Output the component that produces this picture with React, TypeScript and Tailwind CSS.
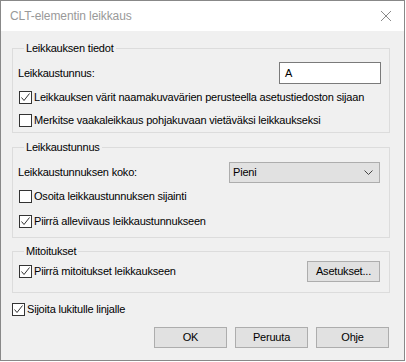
import React from 'react';

const font = { fontFamily: '"Liberation Sans", Arial, sans-serif' };

const CheckBox = ({ checked, label }: { checked?: boolean; label: string }) => (
  <label className="flex items-center h-[16px] text-black">
    <span className="w-[13px] h-[13px] border border-[#333333] bg-white flex items-center justify-center shrink-0">
      {checked && (
        <svg width="11" height="11" viewBox="0 0 11 11">
          <path d="M1.5 5.5 L4 8.5 L9.5 1.5" fill="none" stroke="#333333" strokeWidth="1" />
        </svg>
      )}
    </span>
    <span className="ml-[2px] whitespace-nowrap">{label}</span>
  </label>
);

const Button = ({ children, className = '' }: { children: React.ReactNode; className?: string }) => (
  <button className={`h-[21px] w-[73px] bg-[#e1e1e1] border border-[#adadad] text-black leading-none ${className}`}>
    {children}
  </button>
);

const Group = ({ title, children, className = '' }: { title: string; children: React.ReactNode; className?: string }) => (
  <fieldset className={`border border-[#dcdcdc] w-[378px] min-w-0 pl-[5px] pr-[8px] ${className}`}>
    <legend className="ml-[6px] px-[2px] h-[16px] leading-[16px] text-black">{title}</legend>
    {children}
  </fieldset>
);

export default function App() {
  return (
    <div className="w-[405px] h-[361px] border border-[#888888] bg-[#f0f0f0] flex flex-col text-[11px] tracking-[-0.2px]" style={font}>
      {/* Title bar */}
      <div className="h-[30px] bg-white flex items-center justify-between pl-[9px] pr-[12px] shrink-0">
        <span className="text-[#999999] text-[12px] tracking-[-0.1px]">CLT-elementin leikkaus</span>
        <svg width="12" height="12" viewBox="0 0 12 12">
          <path d="M1 1 L11 11 M11 1 L1 11" stroke="#8a8a8a" strokeWidth="1" />
        </svg>
      </div>

      <div className="flex flex-col pl-[11px] pt-[9px]">
        <Group title="Leikkauksen tiedot" className="pb-[4px]">
          <div className="flex items-center justify-between mt-[6px] h-[22px]">
            <span>Leikkaustunnus:</span>
            <div className="w-[102px] h-[22px] border border-[#7a7a7a] bg-white flex items-center pl-[5px] shrink-0">A</div>
          </div>
          <div className="flex flex-col gap-[7px] mt-[5px] pl-[1px]">
            <CheckBox checked label="Leikkauksen värit naamakuvavärien perusteella asetustiedoston sijaan" />
            <CheckBox label="Merkitse vaakaleikkaus pohjakuvaan vietäväksi leikkaukseksi" />
          </div>
        </Group>

        <Group title="Leikkaustunnus" className="mt-[6px] pb-[8px]">
          <div className="flex items-center justify-between mt-[7px] h-[21px]">
            <span>Leikkaustunnuksen koko:</span>
            <div className="w-[151px] h-[21px] border border-[#adadad] bg-[#e1e1e1] flex items-center justify-between pl-[3px] pr-[6px] mr-[1px] shrink-0">
              <span>Pieni</span>
              <svg width="9" height="5" viewBox="0 0 9 5">
                <path d="M0.5 0.5 L4.5 4.5 L8.5 0.5" fill="none" stroke="#444444" strokeWidth="1" />
              </svg>
            </div>
          </div>
          <div className="flex flex-col gap-[9px] mt-[5px] pl-[1px]">
            <CheckBox label="Osoita leikkaustunnuksen sijainti" />
            <CheckBox checked label="Piirrä alleviivaus leikkaustunnukseen" />
          </div>
        </Group>

        <Group title="Mitoitukset" className="mt-[5px] pb-[10px]">
          <div className="flex items-center justify-between mt-[2px] h-[21px] pl-[1px]">
            <CheckBox checked label="Piirrä mitoitukset leikkaukseen" />
            <Button className="mr-[1px]">Asetukset...</Button>
          </div>
        </Group>

        <div className="mt-[8px]">
          <CheckBox checked label="Sijoita lukitulle linjalle" />
        </div>

        <div className="flex justify-end gap-[8px] mt-[10px] pr-[15px]">
          <Button>OK</Button>
          <Button>Peruuta</Button>
          <Button>Ohje</Button>
        </div>
      </div>
    </div>
  );
}
